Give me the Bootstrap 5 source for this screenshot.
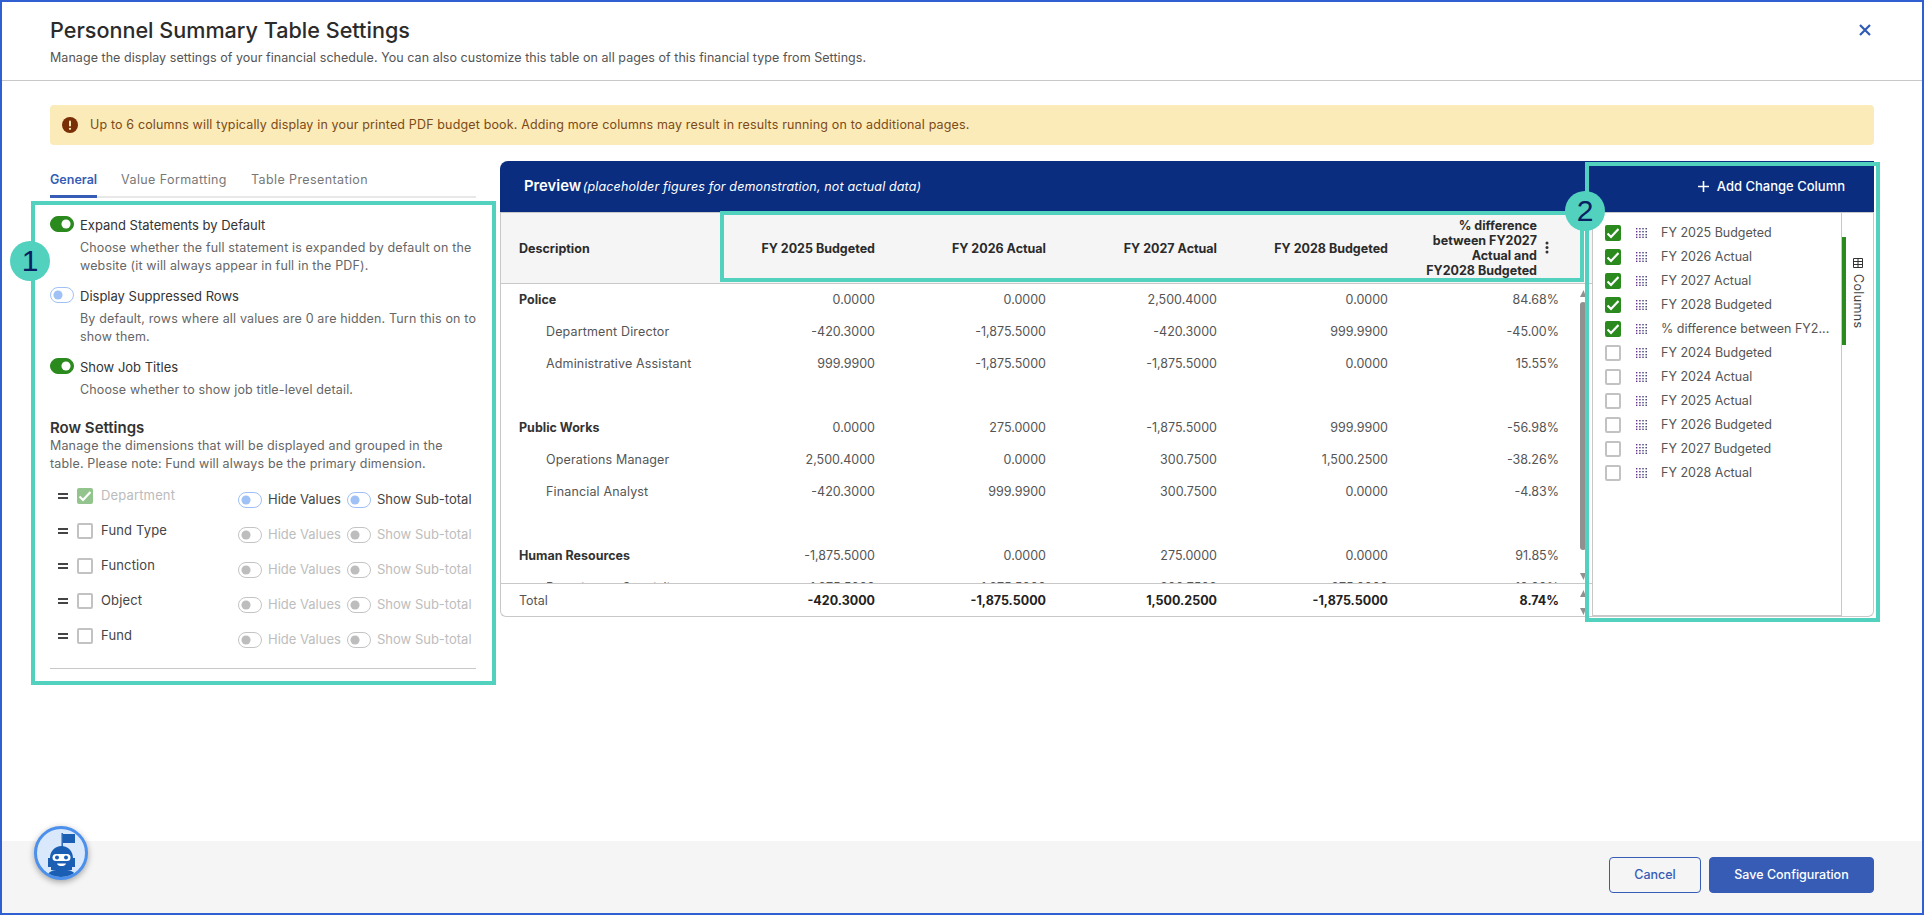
<!DOCTYPE html>
<html lang="en">
<head>
    <meta charset="UTF-8">
    <meta name="viewport" content="width=device-width, initial-scale=1.0">
    <title>Personnel Summary Table Settings</title>
    <link href="https://cdn.jsdelivr.net/npm/bootstrap@5.3.0/dist/css/bootstrap.min.css" rel="stylesheet">
    <style>
        html, body { height: 100%; overflow: hidden; }
        body { font-family: "Inter", "Liberation Sans", sans-serif; font-size: 13px; color: #444; background: #fff; }
        .app-frame { position: relative; height: 915px; border: 2px solid #2f5fd0; display: flex; flex-direction: column; }

        .modal-head { height: 79px; padding: 16px 0 0 48px; border-bottom: 1px solid #c8c8c8; flex: none; position: relative; }
        .modal-head h1 { font-size: 21.6px; font-weight: 500; line-height: 24px; color: #2b2b2b; margin: 0 0 7px; }
        .modal-head p { font-size: 12.5px; line-height: 18px; color: #555; margin: 0; letter-spacing: .05px; }
        .close-x { position: absolute; right: 50px; top: 21px; background: none; border: 0; padding: 0; line-height: 0; }

        .modal-main { flex: 1; padding: 24px 48px 0; min-height: 0; }
        .notice { height: 40px; background: #faebb9; color: #7d4a16; border-radius: 4px; padding-left: 12px; gap: 12px; font-size: 12.5px; letter-spacing: .15px; margin-bottom: 16px; }

        .left-col { width: 426px; flex: none; }
        .tab-links { border-bottom: 2px solid #e8e8e8; height: 37px; gap: 24px; margin-bottom: 18px; }
        .tab-links .nav-link { padding: 10px 0 0; height: 37px; color: #777; font-size: 12.5px; letter-spacing: .4px; }
        .tab-links .nav-link.active { color: #365cb5; font-weight: 600; letter-spacing: 0; border-bottom: 3px solid #365cb5; }

        .opt-block { display: flex; gap: 6px; margin-bottom: 12px; }
        .opt-text { margin-right: -10px; }
        .opt-title { color: #333; line-height: 18px; font-size: 13px; }
        .opt-desc { color: #666; font-size: 12.5px; line-height: 18px; margin: 5px 0 0; letter-spacing: .15px; }
        .row-heading { font-size: 15px; font-weight: 600; color: #333; line-height: 18px; margin: 20px 0 0; }

        .form-check-input.tgl { width: 24px; height: 16px; margin: 0; flex: none; border: 1px solid #9fc1f5; border-radius: 8px; background-color: #fff; background-repeat: no-repeat; background-position: left center; background-size: contain; background-image: url("data:image/svg+xml,%3csvg xmlns='http://www.w3.org/2000/svg' viewBox='-4 -4 8 8'%3e%3ccircle r='2.6' fill='%239fc1f5'/%3e%3c/svg%3e"); }
        .form-check-input.tgl:checked { background-color: #2a8a1e; border-color: #2a8a1e; background-position: right center; background-image: url("data:image/svg+xml,%3csvg xmlns='http://www.w3.org/2000/svg' viewBox='-4 -4 8 8'%3e%3ccircle r='2.6' fill='%23fff'/%3e%3c/svg%3e"); }
        .form-check-input.tgl:disabled { opacity: 1; border-color: #c4c4c4; background-image: url("data:image/svg+xml,%3csvg xmlns='http://www.w3.org/2000/svg' viewBox='-4 -4 8 8'%3e%3ccircle r='2.6' fill='%23bdbdbd'/%3e%3c/svg%3e"); }
        .form-check-input.box { width: 16px; height: 16px; margin: 0; flex: none; border: 2px solid #c2c2c2; border-radius: 2px; background-size: 16px; }
        .form-check-input.box:checked { background-color: #2a8a1e; border-color: #2a8a1e; background-image: url("data:image/svg+xml,%3csvg xmlns='http://www.w3.org/2000/svg' viewBox='0 0 16 16'%3e%3cpath d='M2.500 8.500l3.500 3.500 7.500-8' fill='none' stroke='%23fff' stroke-width='2.200'/%3e%3c/svg%3e"); }
        .form-check-input.box:disabled { opacity: .5; }

        .dim-list { margin-top: 5px; }
        .dim-row { height: 35px; display: flex; align-items: center; }
        .dim-bars { width: 10px; height: 6px; margin: 0 9px 0 8px; border-top: 2px solid #444; border-bottom: 2px solid #444; flex: none; }
        .dim-name { width: 137px; margin-left: 8px; flex: none; letter-spacing: .15px; }
        .dim-row.muted .dim-name { color: #bbb; }
        .dim-opts { display: flex; align-items: center; margin-top: 8px; }
        .dim-opts span { margin-left: 6px; color: #444; }
        .dim-opts span.val-lbl { width: 79px; }
        .dim-opts.off span { color: #bdbdbd; }
        .left-rule { border-top: 1px solid #c8c8c8; margin-top: 15px; }

        .preview { margin-left: 24px; flex: 1; min-width: 0; }
        .preview-bar { height: 51px; background: #0a2d80; color: #fff; border-radius: 8px 0 0 0; padding: 0 29px 0 24px; }
        .preview-bar b { font-size: 14.8px; font-weight: 600; }
        .preview-bar i { font-size: 12.5px; letter-spacing: .15px; margin-left: -2px; }
        .add-col { color: #fff; font-size: 13px; font-weight: 500; gap: 8px; }
        .preview-body { height: 405px; border-top: 1px solid #c8c8c8; }

        .table-area { position: relative; width: 1092px; flex: none; border-left: 1px solid #c8c8c8; border-bottom: 1px solid #c8c8c8; border-radius: 0 0 0 6px; }
        .fig-table { table-layout: fixed; width: 1079px; margin: 0; color: #555; font-size: 12.5px; }
        .fig-table td, .fig-table th { border: 0; padding: 0 21px 0 0; text-align: right; vertical-align: middle; background: transparent; color: inherit; }
        .fig-table td:first-child, .fig-table th:first-child { width: 224px; padding: 0 0 0 18px; text-align: left; }
        .fig-table tr { height: 32px; }
        .fig-table td.group { font-weight: 700; color: #333; }
        .fig-table td.sub { padding-left: 45px; letter-spacing: .15px; }
        .head-wrap { background: #f5f5f5; border-bottom: 1px solid #c8c8c8; height: 71px; }
        .head-wrap .fig-table { height: 70px; color: #2b2b2b; }
        .head-wrap th { font-weight: 700; line-height: 15px; }
        .head-wrap th:last-child { padding-right: 43px; position: relative; }
        .kebab { position: absolute; right: 31px; top: 28px; line-height: 0; }
        .body-wrap { height: 300px; overflow: hidden; border-bottom: 1px solid #c8c8c8; }
        .foot-wrap { height: 31px; padding-top: 3px; }
        .foot-wrap .fig-table tr { height: 28px; }
        .foot-wrap td { color: #222; font-weight: 700; }
        .foot-wrap td:first-child { font-weight: 400; color: #555; }

        .thumb { position: absolute; left: 1079px; width: 6px; background: #909090; }
        .thumb.bar { top: 89px; height: 248px; border-radius: 3px; }
        .thumb.tip { height: 7px; clip-path: polygon(60% 0, 100% 100%, 0 100%); }
        .thumb.tip.down { clip-path: polygon(0 0, 100% 0, 60% 100%); }

        .col-list { width: 250px; flex: none; border-left: 1px solid #c8c8c8; border-right: 1px solid #c8c8c8; border-bottom: 2px solid #c8c8c8; padding: 8px 12px 0; }
        .col-item { height: 24px; display: flex; align-items: center; color: #555; font-size: 12.5px; white-space: nowrap; }
        .col-item svg { margin: 0 14px 0 15px; flex: none; }
        .side-rail { position: relative; flex: 1; border-right: 1px solid #c8c8c8; border-bottom: 1px solid #c8c8c8; border-radius: 0 0 6px 0; display: flex; flex-direction: column; align-items: center; padding-top: 45px; gap: 6px; color: #444; font-size: 12.5px; letter-spacing: .35px; }
        .side-rail span { writing-mode: vertical-rl; }
        .rail-mark { position: absolute; left: 0; top: 24px; width: 4px; height: 108px; background: #2a8a1e; }

        .modal-foot { height: 72px; flex: none; background: #f5f5f5; padding: 16px 48px 0 0; gap: 8px; }
        .btn-cancel, .btn-save { height: 36px; font-size: 12.5px; font-weight: 500; border-radius: 4px; padding: 0; }
        .btn-cancel { width: 92px; background: transparent; border: 1px solid #365cb5; color: #365cb5; }
        .btn-save { width: 165px; background: #365cb5; border: 1px solid #365cb5; color: #fff; }

        /* annotations over the screenshot */
        .callout { position: absolute; border: 4px solid #52d1bf; pointer-events: none; }
        .callout-num { position: absolute; width: 40px; height: 40px; border-radius: 50%; background: #52d1bf; color: #0a2060; font-family: "Liberation Sans", sans-serif; font-size: 30px; line-height: 40px; text-align: center; }
        .robot-btn { position: absolute; left: 32px; top: 824px; width: 54px; height: 54px; border-radius: 50%; border: 3px solid #4a90ec; background: #d9e9fb; box-shadow: 0 2px 6px rgba(0,0,0,.35); overflow: hidden; line-height: 0; }
    </style>
</head>
<body>
<svg width="0" height="0" class="position-absolute">
    <symbol id="grip" viewBox="0 0 11 10">
        <g fill="#6a2c8c"><rect x="0" y="0" width="1.4" height="1.4"/><rect x="0" y="3" width="1.4" height="1.4"/><rect x="0" y="6" width="1.4" height="1.4"/><rect x="0" y="8.6" width="1.4" height="1.4"/></g>
        <g fill="#4f2f80"><rect x="3.2" y="0" width="1.4" height="1.4"/><rect x="3.2" y="3" width="1.4" height="1.4"/><rect x="3.2" y="6" width="1.4" height="1.4"/><rect x="3.2" y="8.6" width="1.4" height="1.4"/></g>
        <g fill="#3f3a80"><rect x="6.3" y="0" width="1.4" height="1.4"/><rect x="6.3" y="3" width="1.4" height="1.4"/><rect x="6.3" y="6" width="1.4" height="1.4"/><rect x="6.3" y="8.6" width="1.4" height="1.4"/></g>
        <g fill="#3a3a70"><rect x="9.5" y="0" width="1.4" height="1.4"/><rect x="9.5" y="3" width="1.4" height="1.4"/><rect x="9.5" y="6" width="1.4" height="1.4"/><rect x="9.5" y="8.6" width="1.4" height="1.4"/></g>
    </symbol>
</svg>

<div class="app-frame">
    <!-- Header -->
    <div class="modal-head">
        <h1>Personnel Summary Table Settings</h1>
        <p>Manage the display settings of your financial schedule. You can also customize this table on all pages of this financial type from Settings.</p>
        <button class="close-x" type="button" aria-label="Close">
            <svg width="14" height="14" viewBox="0 0 14 14"><path d="M2 2 12 12M12 2 2 12" stroke="#2f5bb5" stroke-width="2.2" fill="none"/></svg>
        </button>
    </div>

    <div class="modal-main">
        <div class="notice d-flex align-items-center">
            <svg width="16" height="16" viewBox="0 0 16 16"><circle cx="8" cy="8" r="8" fill="#7a2e05"/><rect x="7" y="3.4" width="2" height="6" rx="1" fill="#faebb9"/><circle cx="8" cy="11.8" r="1.15" fill="#faebb9"/></svg>
            <span>Up to 6 columns will typically display in your printed PDF budget book. Adding more columns may result in results running on to additional pages.</span>
        </div>

        <div class="d-flex">
            <!-- Left settings column -->
            <div class="left-col">
                <ul class="nav tab-links">
                    <li class="nav-item"><a class="nav-link active" href="#">General</a></li>
                    <li class="nav-item"><a class="nav-link" href="#">Value Formatting</a></li>
                    <li class="nav-item"><a class="nav-link" href="#">Table Presentation</a></li>
                </ul>

                <div class="opt-block">
                    <input class="form-check-input tgl" type="checkbox" role="switch" checked>
                    <div class="opt-text">
                        <div class="opt-title">Expand Statements by Default</div>
                        <p class="opt-desc">Choose whether the full statement is expanded by default on the website (it will always appear in full in the PDF).</p>
                    </div>
                </div>
                <div class="opt-block">
                    <input class="form-check-input tgl" type="checkbox" role="switch">
                    <div class="opt-text">
                        <div class="opt-title">Display Suppressed Rows</div>
                        <p class="opt-desc">By default, rows where all values are 0 are hidden. Turn this on to show them.</p>
                    </div>
                </div>
                <div class="opt-block">
                    <input class="form-check-input tgl" type="checkbox" role="switch" checked>
                    <div class="opt-text">
                        <div class="opt-title">Show Job Titles</div>
                        <p class="opt-desc">Choose whether to show job title-level detail.</p>
                    </div>
                </div>

                <h2 class="row-heading">Row Settings</h2>
                <p class="opt-desc mt-0">Manage the dimensions that will be displayed and grouped in the table. Please note: Fund will always be the primary dimension.</p>
                <div class="dim-list" id="dimRows"></div>
                <div class="left-rule"></div>
            </div>

            <!-- Preview -->
            <div class="preview">
                <div class="preview-bar d-flex align-items-center justify-content-between">
                    <div><b>Preview</b> <i>(placeholder figures for demonstration, not actual data)</i></div>
                    <div class="add-col d-flex align-items-center">
                        <svg width="11" height="11" viewBox="0 0 11 11"><path d="M5.5 0v11M0 5.5h11" stroke="#fff" stroke-width="1.6"/></svg>
                        <span>Add Change Column</span>
                    </div>
                </div>
                <div class="preview-body d-flex">
                    <div class="table-area">
                        <div class="head-wrap">
                            <table class="table fig-table">
                                <tr>
                                    <th>Description</th>
                                    <th>FY 2025 Budgeted</th>
                                    <th>FY 2026 Actual</th>
                                    <th>FY 2027 Actual</th>
                                    <th>FY 2028 Budgeted</th>
                                    <th>% difference<br>between FY2027<br>Actual and<br>FY2028 Budgeted
                                        <span class="kebab"><svg width="4" height="13" viewBox="0 0 4 13"><circle cx="2" cy="2" r="1.5" fill="#333"/><circle cx="2" cy="6.5" r="1.5" fill="#333"/><circle cx="2" cy="11" r="1.5" fill="#333"/></svg></span>
                                    </th>
                                </tr>
                            </table>
                        </div>
                        <div class="body-wrap">
                            <table class="table fig-table"><tbody id="figRows"></tbody></table>
                        </div>
                        <div class="foot-wrap">
                            <table class="table fig-table">
                                <tr><td>Total</td><td>-420.3000</td><td>-1,875.5000</td><td>1,500.2500</td><td>-1,875.5000</td><td>8.74%</td></tr>
                            </table>
                        </div>
                        <div class="thumb tip" style="top:77px"></div>
                        <div class="thumb bar"></div>
                        <div class="thumb tip down" style="top:360px"></div>
                        <div class="thumb tip" style="top:377px"></div>
                        <div class="thumb tip down" style="top:395px"></div>
                    </div>
                    <div class="col-list" id="colList"></div>
                    <div class="side-rail">
                        <div class="rail-mark"></div>
                        <svg width="10" height="10" viewBox="0 0 10 10"><path d="M.5.5h9v9h-9zM.5 3.5h9M.5 6.5h9M5 .5v9" stroke="#333" fill="none"/></svg>
                        <span>Columns</span>
                    </div>
                </div>
            </div>
        </div>
    </div>

    <!-- Footer -->
    <div class="modal-foot d-flex justify-content-end">
        <button class="btn btn-cancel" type="button">Cancel</button>
        <button class="btn btn-save" type="button">Save Configuration</button>
    </div>

    <!-- Annotations -->
    <div class="callout" style="left:29px;top:199px;width:465px;height:484px"></div>
    <div class="callout-num" style="left:8px;top:239px">1</div>
    <div class="callout" style="left:718px;top:209px;width:864px;height:71px"></div>
    <div class="callout" style="left:1583px;top:160px;width:295px;height:460px"></div>
    <div class="callout-num" style="left:1563px;top:189px">2</div>

    <div class="robot-btn">
        <svg width="48" height="48" viewBox="0 0 48 48">
            <path d="M24.5 4h1.4v14h-1.4zM26 5h12v9H26z" fill="#1a5fb4"/>
            <path d="M13 29c0-7 5-12 11.500-12S36 22 36 29h2v9h-3v3H14v-3h-3v-9z" fill="#1a5fb4"/>
            <rect x="15.500" y="25" width="18" height="7" rx="3.500" fill="#fff"/>
            <circle cx="20" cy="28.500" r="2" fill="#1a5fb4"/><circle cx="29" cy="28.500" r="2" fill="#1a5fb4"/>
            <path d="M20 34.500h9c-.5 2-2.500 2.500-4.500 2.500s-4-.5-4.500-2.500z" fill="#fff"/>
            <path d="M10 48c0-4 5-7 9-7h11c4 0 9 3 9 7z" fill="#1a5fb4"/>
        </svg>
    </div>
</div>

<script src="https://cdn.jsdelivr.net/npm/bootstrap@5.3.0/dist/js/bootstrap.bundle.min.js"></script>
<script>
    const figures = [
        ['group', 'Police', '0.0000', '0.0000', '2,500.4000', '0.0000', '84.68%'],
        ['sub', 'Department Director', '-420.3000', '-1,875.5000', '-420.3000', '999.9900', '-45.00%'],
        ['sub', 'Administrative Assistant', '999.9900', '-1,875.5000', '-1,875.5000', '0.0000', '15.55%'],
        ['', '', '', '', '', '', ''],
        ['group', 'Public Works', '0.0000', '275.0000', '-1,875.5000', '999.9900', '-56.98%'],
        ['sub', 'Operations Manager', '2,500.4000', '0.0000', '300.7500', '1,500.2500', '-38.26%'],
        ['sub', 'Financial Analyst', '-420.3000', '999.9900', '300.7500', '0.0000', '-4.83%'],
        ['', '', '', '', '', '', ''],
        ['group', 'Human Resources', '-1,875.5000', '0.0000', '275.0000', '0.0000', '91.85%'],
        ['sub', 'Recruitment Specialist', '-1,875.5000', '-1,875.5000', '300.7500', '275.0000', '-10.00%']
    ];
    document.getElementById('figRows').innerHTML = figures.map(row => {
        const cells = row.slice(2).map(v => `<td>${v}</td>`).join('');
        return `<tr><td class="${row[0]}">${row[1]}</td>${cells}</tr>`;
    }).join('');

    const dims = [['Department', true], ['Fund Type'], ['Function'], ['Object'], ['Fund']];
    document.getElementById('dimRows').innerHTML = dims.map(([name, on]) => `
        <div class="dim-row ${on ? 'muted' : ''}">
            <div class="dim-bars"></div>
            <input class="form-check-input box" type="checkbox" ${on ? 'checked disabled' : ''}>
            <div class="dim-name">${name}</div>
            <div class="dim-opts ${on ? '' : 'off'}">
                <input class="form-check-input tgl" type="checkbox" role="switch" ${on ? '' : 'disabled'}>
                <span class="val-lbl">Hide Values</span>
                <input class="form-check-input tgl" type="checkbox" role="switch" ${on ? '' : 'disabled'}>
                <span>Show Sub-total</span>
            </div>
        </div>`).join('');

    const cols = [
        ['FY 2025 Budgeted', true], ['FY 2026 Actual', true], ['FY 2027 Actual', true], ['FY 2028 Budgeted', true],
        ['% difference between FY2...', true], ['FY 2024 Budgeted'], ['FY 2024 Actual'], ['FY 2025 Actual'],
        ['FY 2026 Budgeted'], ['FY 2027 Budgeted'], ['FY 2028 Actual']
    ];
    document.getElementById('colList').innerHTML = cols.map(([name, on]) => `
        <div class="col-item">
            <input class="form-check-input box" type="checkbox" ${on ? 'checked' : ''}>
            <svg width="11" height="10"><use href="#grip"/></svg>
            <span>${name}</span>
        </div>`).join('');
</script>
</body>
</html>
